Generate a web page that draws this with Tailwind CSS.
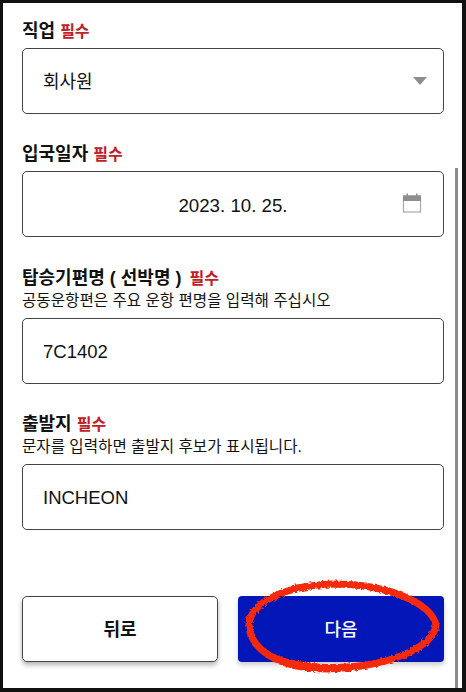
<!DOCTYPE html>
<html lang="ko">
<head>
  <meta charset="UTF-8" />
  <title>입국 신고</title>
  <script src="https://cdn.jsdelivr.net/npm/@tailwindcss/browser@4"></script>
</head>
<body class="w-[466px] h-[692px] overflow-hidden bg-[#111] font-['Liberation_Sans','Noto_Sans_CJK_KR',sans-serif] text-[#111]">
  <div class="relative m-[3px] h-[685px] w-[459px] overflow-hidden bg-white">
    <main class="flex h-full flex-col pl-[19px] pr-[18px]">
      <!-- 직업 -->
      <label class="mt-[15px] block h-[27px] text-[18px] leading-[27px] font-bold">직업 <span class="text-[16px] text-[#c02026]">필수</span></label>
      <div class="mt-[3px] flex h-[66px] items-center justify-between rounded-[5px] border border-[#444] pl-[20px] pr-[16px] text-[18px]">
        <span class="pt-[2px]">회사원</span>
        <span class="h-0 w-0 border-x-[7px] border-t-[8px] border-x-transparent border-t-[#8e8e8e]"></span>
      </div>

      <!-- 입국일자 -->
      <label class="mt-[27px] block h-[27px] text-[18px] leading-[27px] font-bold">입국일자 <span class="text-[16px] text-[#c02026]">필수</span></label>
      <div class="relative mt-[3px] flex h-[66px] items-center justify-center rounded-[5px] border border-[#444] text-[18.7px]">
        <span class="pt-[5px]">2023. 10. 25.</span>
        <svg class="absolute right-[21px] top-[21px]" width="20" height="20" viewBox="0 0 20 20">
          <rect x="1.5" y="3" width="17" height="16" fill="none" stroke="#a8a8a8" stroke-width="1.2"/>
          <rect x="1" y="2.5" width="18" height="5.5" fill="#8e8e8e"/>
          <rect x="4.5" y="0.5" width="1.5" height="3" fill="#8e8e8e"/>
          <rect x="14" y="0.5" width="1.5" height="3" fill="#8e8e8e"/>
        </svg>
      </div>

      <!-- 탑승기편명 -->
      <label class="mt-[27px] block h-[27px] text-[18px] leading-[29px] font-bold">탑승기편명 ( 선박명 ) <span class="ml-[3px] text-[16px] text-[#c02026]">필수</span></label>
      <p class="h-[24px] text-[15.6px] leading-[20px]">공동운항편은 주요 운항 편명을 입력해 주십시오</p>
      <div class="mt-[3px] flex h-[66px] items-center rounded-[5px] border border-[#444] pl-[20px] pt-[2px] text-[18.5px]">7C1402</div>

      <!-- 출발지 -->
      <label class="mt-[26px] block h-[27px] text-[18px] leading-[29px] font-bold">출발지 <span class="text-[16px] text-[#c02026]">필수</span></label>
      <p class="h-[24px] text-[15.6px] leading-[20px]">문자를 입력하면 출발지 후보가 표시됩니다.</p>
      <div class="mt-[3px] flex h-[66px] items-center rounded-[5px] border border-[#444] pl-[20px] pt-[2px] text-[18.5px]">INCHEON</div>

      <!-- 버튼 -->
      <div class="mt-[66px] flex gap-[20px]">
        <button class="h-[66px] w-[196px] rounded-[5px] border border-[#444] bg-white pt-[2px] text-[18px] font-bold shadow-[0_3px_5px_rgba(0,0,0,0.3)]">뒤로</button>
        <button class="h-[66px] w-[206px] rounded-[4px] bg-[#0316b8] pt-[2px] text-[18px] font-medium text-white shadow-[0_3px_5px_rgba(0,0,0,0.2)]">다음</button>
      </div>
    </main>

    <!-- scrollbar -->
    <div class="absolute right-[4px] top-[165px] bottom-0 w-[3px] bg-[#8c8c8c]"></div>

    <!-- hand-drawn circle over the next button -->
    <svg class="absolute left-[0] top-[0] pointer-events-none" width="459" height="685" viewBox="0 0 459 685">
      <defs>
        <filter id="rough" x="-10%" y="-20%" width="120%" height="140%">
          <feTurbulence type="fractalNoise" baseFrequency="0.4" numOctaves="2" seed="4"/>
          <feDisplacementMap in="SourceGraphic" scale="4"/>
        </filter>
      </defs>
      <g filter="url(#rough)" fill="none" stroke="#f52a08">
        <path d="M332 581 C385 581 428 600 433 622 C430 645 385 664 325 666 C275 666 247 646 246 622 C247 600 282 582 332 581 Z" stroke-width="7"/>
        <path d="M290 584 C340 577 395 586 424 608" stroke-width="4"/>
        <path d="M262 648 C285 664 340 669 395 654" stroke-width="4"/>
      </g>
    </svg>
  </div>
</body>
</html>
